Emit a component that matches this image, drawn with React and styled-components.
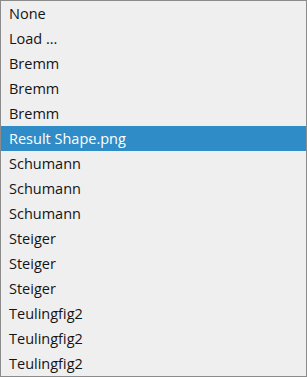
import React from "react";
import styled, { createGlobalStyle } from "styled-components";

const Global = createGlobalStyle`
  html, body {
    margin: 0;
    padding: 0;
    background: #efefef;
  }
`;

const List = styled.ul`
  list-style: none;
  margin: 0;
  padding: 0;
  width: 307px;
  height: 377px;
  box-sizing: border-box;
  border: 1px solid #8b8b8b;
  background-color: #efefef;
  display: flex;
  flex-direction: column;
  font-family: "Open Sans", "Noto Sans", sans-serif;
  font-size: 14.5px;
`;

const Item = styled.li`
  height: 25px;
  display: flex;
  align-items: center;
  padding-left: 8px;
  color: ${(p) => (p.$selected ? "#ffffff" : "#141414")};
  background-color: ${(p) => (p.$selected ? "#308cc6" : "transparent")};
`;

const items = [
  "None",
  "Load ...",
  "Bremm",
  "Bremm",
  "Bremm",
  "Result Shape.png",
  "Schumann",
  "Schumann",
  "Schumann",
  "Steiger",
  "Steiger",
  "Steiger",
  "Teulingfig2",
  "Teulingfig2",
  "Teulingfig2",
];

export default function App() {
  return (
    <>
      <Global />
      <List>
        {items.map((name, i) => (
          <Item key={i} $selected={i === 5}>
            {name}
          </Item>
        ))}
      </List>
    </>
  );
}
